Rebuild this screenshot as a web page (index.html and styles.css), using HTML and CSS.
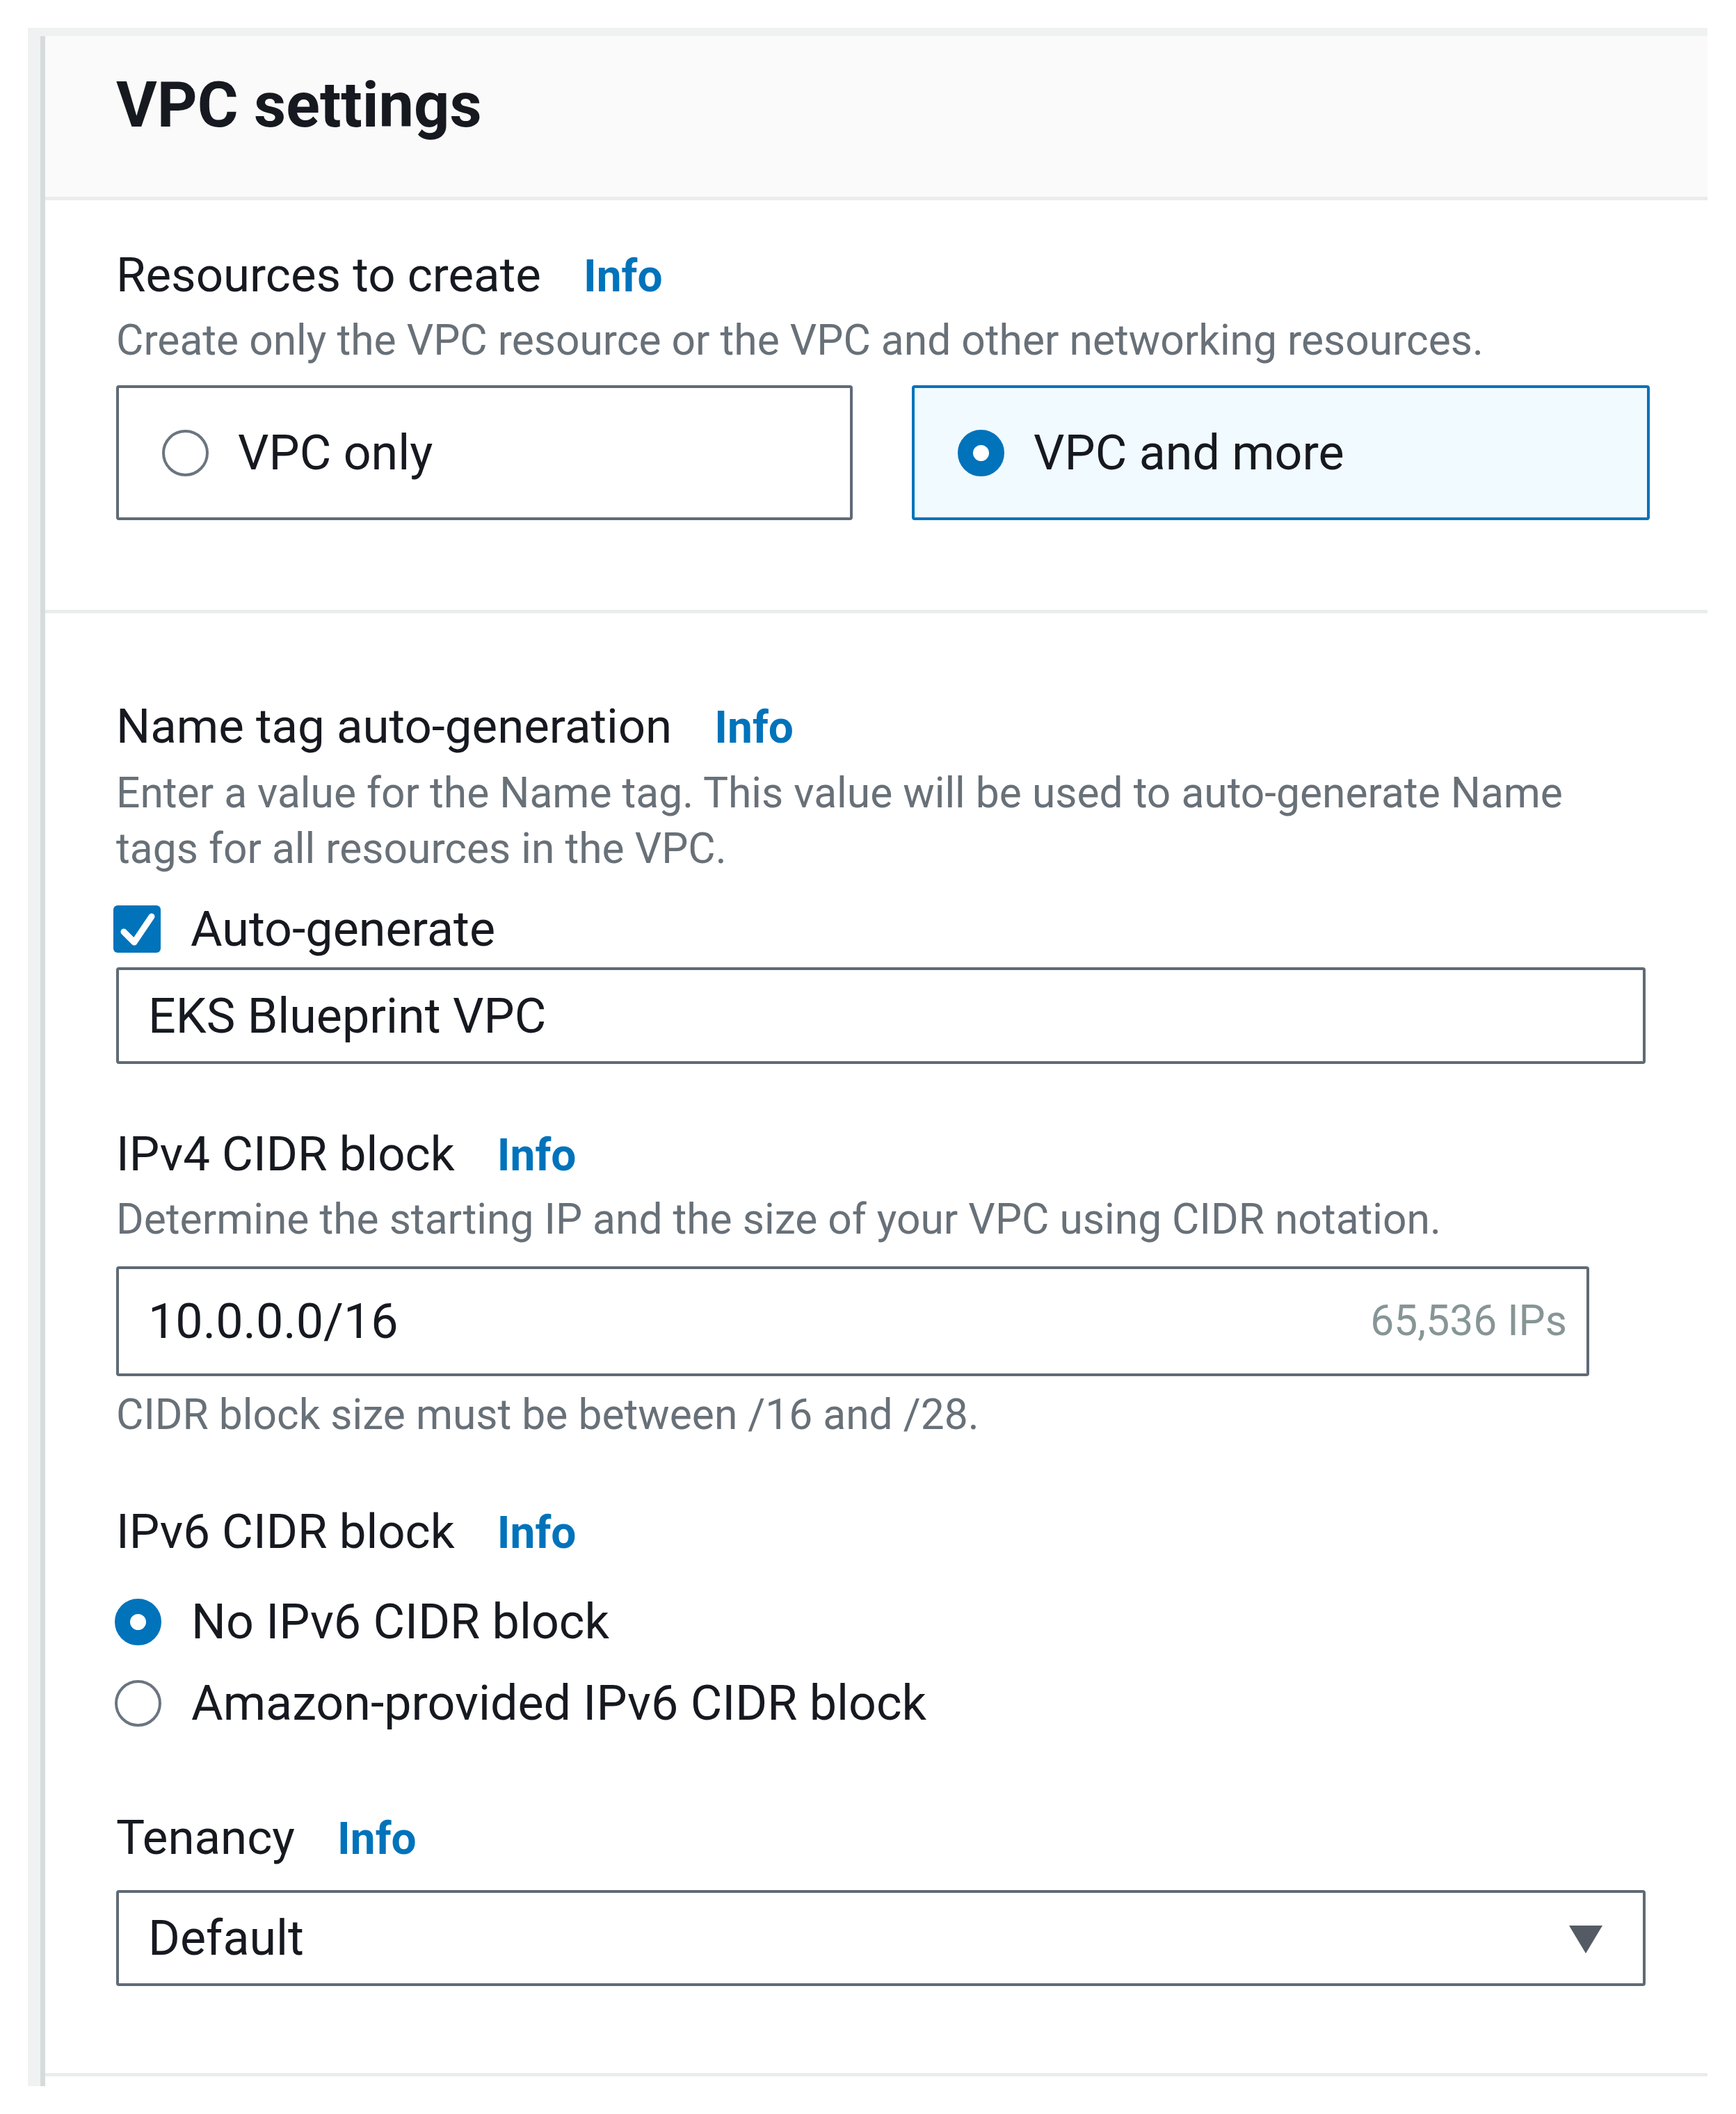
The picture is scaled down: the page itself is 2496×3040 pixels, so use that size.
FILE: index.html
```html
<!DOCTYPE html>
<html lang="en">
<head>
<meta charset="utf-8">
<title>VPC settings</title>
<link rel="stylesheet" href="styles.css">
</head>
<body>
<div class="frame">
  <div class="panel">
    <header class="panel-header">
      <h2 class="panel-title">VPC settings</h2>
    </header>

    <section class="section section-first">
      <div class="label">Resources to create <a class="info">Info</a></div>
      <div class="desc">Create only the VPC resource or the VPC and other networking resources.</div>
      <div class="tiles">
        <div class="tile">
          <span class="radio"></span>
          <span class="tile-text">VPC only</span>
        </div>
        <div class="tile tile-selected">
          <span class="radio radio-checked"></span>
          <span class="tile-text">VPC and more</span>
        </div>
      </div>
    </section>

    <section class="section section-second">
      <div class="label">Name tag auto-generation <a class="info">Info</a></div>
      <div class="desc desc-wrap">Enter a value for the Name tag. This value will be used to auto-generate Name tags for all resources in the VPC.</div>
      <div class="check-row">
        <span class="checkbox">
          <svg viewBox="0 0 68 68" width="68" height="68"><path d="M15 38 L30 53 L55 16" fill="none" stroke="#fff" stroke-width="9" stroke-linecap="round" stroke-linejoin="round"/></svg>
        </span>
        <span class="option-text">Auto-generate</span>
      </div>
      <div class="input input-name">EKS Blueprint VPC</div>

      <div class="label label-ipv4">IPv4 CIDR block <a class="info">Info</a></div>
      <div class="desc">Determine the starting IP and the size of your VPC using CIDR notation.</div>
      <div class="input input-cidr">
        <span>10.0.0.0/16</span>
        <span class="input-hint">65,536 IPs</span>
      </div>
      <div class="desc constraint">CIDR block size must be between /16 and /28.</div>

      <div class="label label-ipv6">IPv6 CIDR block <a class="info">Info</a></div>
      <div class="radio-group">
        <div class="radio-row">
          <span class="radio radio-checked"></span>
          <span class="option-text">No IPv6 CIDR block</span>
        </div>
        <div class="radio-row">
          <span class="radio"></span>
          <span class="option-text">Amazon-provided IPv6 CIDR block</span>
        </div>
      </div>

      <div class="label label-tenancy">Tenancy <a class="info">Info</a></div>
      <div class="input select">
        <span>Default</span>
        <span class="caret"></span>
      </div>
    </section>
  </div>
</div>
</body>
</html>
```

FILE: styles.css
```css
html, body {
  margin: 0;
  padding: 0;
  background: #ffffff;
}

body {
  font-family: Roboto, "Noto Sans", "Liberation Sans", sans-serif;
  color: #16191f;
  width: 2496px;
  height: 3040px;
  overflow: hidden;
}

.frame {
  margin: 40px 0 0 40px;
  width: 2415px;
  height: 2960px;
  box-sizing: border-box;
  background: #f0f2f2;
  padding: 12px 0 0 18px;
}

.panel {
  height: 100%;
  box-sizing: border-box;
  border-left: 7px solid #d6dbdb;
  background: #ffffff;
}

.panel-header {
  background: #fafafa;
  border-bottom: 5px solid #eaeded;
  padding: 50px 0 81px 102px;
}

.panel-title {
  margin: 0;
  font-size: 90px;
  line-height: 100px;
  font-weight: 700;
  color: #16191f;
}

.section {
  padding-left: 102px;
  padding-right: 83px;
}

.section-first {
  padding-top: 68px;
  padding-bottom: 129px;
  border-bottom: 5px solid #eaeded;
}

.section-second {
  padding-top: 123px;
  padding-bottom: 125px;
  border-bottom: 5px solid #eaeded;
}

.label {
  font-size: 69px;
  line-height: 80px;
  color: #16191f;
}

.info {
  margin-left: 44px;
  font-size: 64px;
  font-weight: 700;
  color: #0073bb;
  text-decoration: none;
}

.desc {
  margin-top: 12px;
  font-size: 60.5px;
  line-height: 80px;
  color: #687078;
}

.desc-wrap {
  width: 2190px;
  margin-top: 14px;
}

.tiles {
  margin-top: 24px;
  display: grid;
  grid-template-columns: 1059px 1061px;
  column-gap: 85px;
}

.tile {
  height: 194px;
  box-sizing: border-box;
  border: 4px solid #5f6b76;
  border-radius: 4px;
  display: flex;
  align-items: center;
  padding-left: 62px;
  gap: 42px;
}

.tile-selected {
  border-color: #0073bb;
  background: #f1faff;
}

.tile-text, .option-text {
  font-size: 70px;
  line-height: 80px;
  color: #16191f;
}

.radio {
  display: block;
  flex: none;
  width: 67px;
  height: 67px;
  box-sizing: border-box;
  border-radius: 50%;
  border: 4px solid #6b7580;
  background: #ffffff;
}

.radio-checked {
  border: 22px solid #0073bb;
}

.check-row {
  margin-top: 35px;
  display: flex;
  align-items: center;
  gap: 43px;
  margin-left: -4px;
}

.checkbox {
  display: block;
  width: 68px;
  height: 68px;
  border-radius: 6px;
  background: #0073bb;
}

.checkbox svg {
  display: block;
}

.input {
  margin-top: 15px;
  width: 2199px;
  box-sizing: border-box;
  border: 4px solid #5f6b76;
  border-radius: 4px;
  display: flex;
  align-items: center;
  padding: 0 42px;
  font-size: 70px;
  line-height: 80px;
  color: #16191f;
}

.input-name {
  height: 139px;
}

.input-cidr {
  margin-top: 27px;
  width: 2118px;
  height: 158px;
  justify-content: space-between;
  padding-right: 28px;
}

.input-hint {
  font-size: 60.5px;
  color: #879596;
}

.constraint {
  margin-top: 16px;
}

.label-ipv4 {
  margin-top: 90px;
}

.label-ipv6 {
  margin-top: 88px;
}

.radio-group {
  margin-top: 47px;
  display: flex;
  flex-direction: column;
  gap: 37px;
}

.radio-row {
  display: flex;
  align-items: center;
  gap: 43px;
  margin-left: -2px;
}

.label-tenancy {
  margin-top: 114px;
}

.select {
  margin-top: 33px;
  height: 138px;
  justify-content: space-between;
  padding-right: 58px;
}

.caret {
  width: 0;
  height: 0;
  border-left: 24px solid transparent;
  border-right: 24px solid transparent;
  border-top: 40px solid #545b64;
  margin-top: 4px;
}
```
